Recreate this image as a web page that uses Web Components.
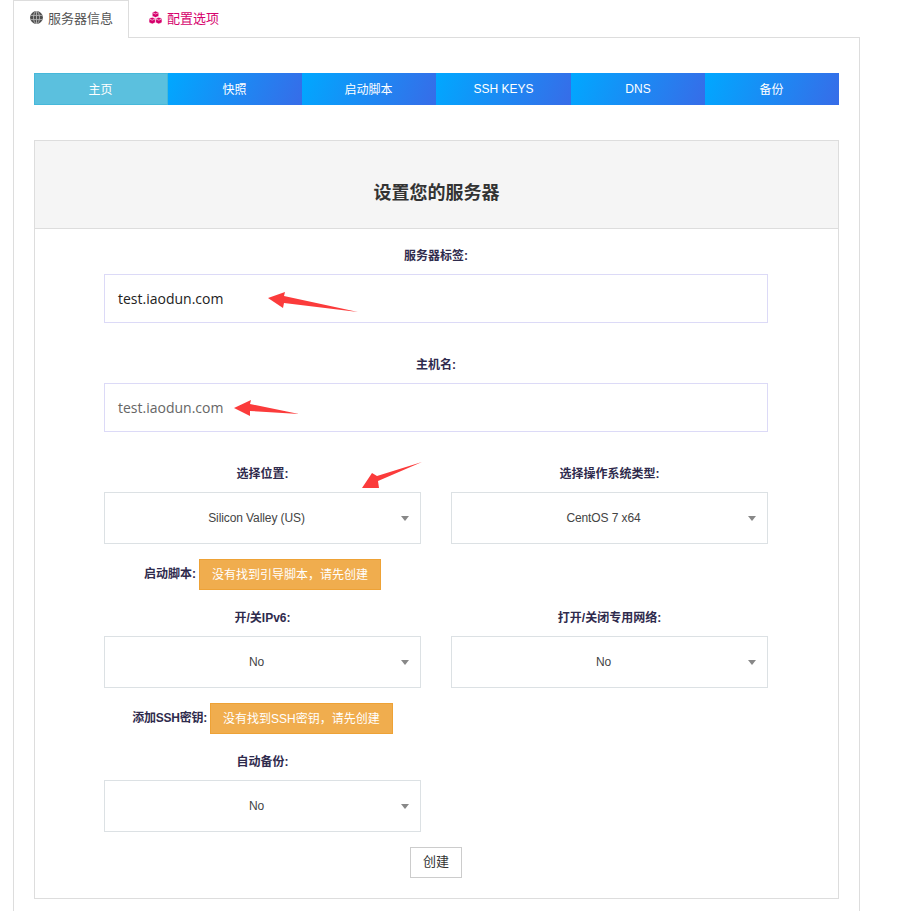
<!DOCTYPE html>
<html lang="zh"><head><meta charset="utf-8">
<style>
html,body{margin:0;padding:0;background:#fff;overflow:hidden;height:911px}
body{font-family:"Liberation Sans","Noto Sans CJK SC",sans-serif}
</style></head><body>
<server-page></server-page>
<script>
function el(name,html){
  customElements.define(name,class extends HTMLElement{
    constructor(){super();this.attachShadow({mode:'open'}).innerHTML=html;}
  });
}
const FONT='"Liberation Sans","Noto Sans CJK SC",sans-serif';
el('tab-item',`<style>
:host{display:flex;align-items:center;gap:5px;box-sizing:border-box;height:38px;font-size:13px;color:#555;padding:0 15px 4px 16px}
:host([active]){border:solid #ddd;border-width:1px 1px 0 1px;background:#fff;margin-bottom:-1px;height:38px}
:host(:not([active])){color:#d6006c;padding-left:20px}
</style><slot name="icon"></slot><slot></slot>`);
el('nav-pill',`<style>
:host{height:32px;display:flex;align-items:center;justify-content:center;color:#fff;font-size:12px;background:linear-gradient(110deg,#00a8ff,#376ce8);box-sizing:border-box}
:host([cjk]){padding:0 1px 2px 0}
:host([active]){background:#5bc0de;box-shadow:inset 0 0 0 1px #46b8da}
</style><slot></slot>`);
el('field-label',`<style>
:host{display:block;text-align:center;font-size:12px;font-weight:700;color:#2f2b4d;line-height:16px}
</style><slot></slot>`);
el('text-field',`<style>
:host{display:flex;align-items:center;box-sizing:border-box;height:49px;border:1px solid #dcdaf7;padding:0 13px;font:14px "Open Sans",sans-serif;color:#222}
:host([dim]){color:#666}
</style><slot></slot>`);
el('select-box',`<style>
:host{display:flex;align-items:center;justify-content:center;position:relative;box-sizing:border-box;height:52px;border:1px solid #dce1e4;font-size:12px;letter-spacing:-.1px;color:#444;padding-right:12px}
i{position:absolute;right:11px;top:23px;width:0;height:0;border:solid transparent;border-width:5px 4px 0;border-top-color:#888}
</style><slot></slot><i></i>`);
el('warn-row',`<style>
:host{display:flex;align-items:center;justify-content:center;width:317px;align-self:flex-start;font-size:12px;font-weight:700;color:#2f2b4d;gap:3px}
span{padding-bottom:5px;letter-spacing:var(--label-ls,0)}
b{font-weight:400;font-size:12px;color:#fff;background:#f0ad4e;border:1px solid #eea236;height:31px;box-sizing:border-box;padding:0 12px 2px;display:flex;align-items:center}
</style><span><slot></slot></span><b><slot name="msg"></slot></b>`);
el('server-page',`<style>
:host{display:block;position:relative;width:921px;height:911px;overflow:hidden;font-family:${FONT}}
.tabs{display:flex;margin-left:13px;height:38px;position:relative;z-index:1}
.panel{box-sizing:border-box;margin:-1px 0 0 13px;width:847px;height:900px;border:1px solid #ddd;border-bottom:0;padding:35px 20px 0}
.pills{display:grid;grid-template-columns:134px 134px 134px 135px 134px 134px}
.card{box-sizing:border-box;margin-top:35px;border:1px solid #ddd;height:759px}
.head{background:#f5f5f5;border-bottom:1px solid #ddd;height:88px;box-sizing:border-box;padding-top:40px;text-align:center;font-size:18px;font-weight:700;color:#333;line-height:25px}
.form{padding:19px 70px 0 69px;display:flex;flex-direction:column}
.two{display:grid;grid-template-columns:317px 317px;gap:30px}
.two>div{display:flex;flex-direction:column;gap:10px}
.btn{align-self:center;margin:15px 0 0;width:52px;height:31px;box-sizing:border-box;border:1px solid #ccc;font-size:13px;color:#333;display:flex;align-items:center;justify-content:center;padding-bottom:4px}
svg.ar{position:absolute;left:0;top:0;pointer-events:none}
</style>
<div class="tabs">
<tab-item active><svg slot="icon" width="13" height="13" viewBox="0 0 13 13"><circle cx="6.5" cy="6.5" r="6.4" fill="#4d4d4d"/><g stroke="#b5b5b5" stroke-width=".9" fill="none"><path d="M.5 4.4h12M.5 8.6h12M6.5 0v13"/><ellipse cx="6.5" cy="6.5" rx="3" ry="6.2"/></g></svg>服务器信息</tab-item>
<tab-item><svg slot="icon" width="13" height="13" viewBox="0 0 13 13" fill="#d6006c" stroke="#fff" stroke-width=".6"><path d="M6.5 0L9.8 1.4V5.2L6.5 6.6L3.2 5.2V1.4Z"/><path d="M3.2 6.2L6.4 7.6V11.6L3.2 13L0 11.6V7.6Z"/><path d="M9.8 6.2L13 7.6V11.6L9.8 13L6.6 11.6V7.6Z"/><path d="M3.6 1.8L6.5 3L9.4 1.8M.4 8L3.2 9.2L6 8M7 8L9.8 9.2L12.6 8" fill="none"/></svg>配置选项</tab-item>
</div>
<div class="panel">
<div class="pills"><nav-pill active cjk>主页</nav-pill><nav-pill cjk>快照</nav-pill><nav-pill cjk>启动脚本</nav-pill><nav-pill>SSH KEYS</nav-pill><nav-pill>DNS</nav-pill><nav-pill cjk>备份</nav-pill></div>
<div class="card">
<div class="head">设置您的服务器</div>
<div class="form">
<field-label>服务器标签:</field-label>
<text-field style="margin-top:10px">test.iaodun.com</text-field>
<field-label style="margin-top:34px">主机名:</field-label>
<text-field dim style="margin-top:10px">test.iaodun.com</text-field>
<div class="two" style="margin-top:34px"><div><field-label>选择位置:</field-label><select-box>Silicon Valley (US)</select-box></div><div><field-label>选择操作系统类型:</field-label><select-box>CentOS 7 x64</select-box></div></div>
<warn-row style="margin-top:15px">启动脚本:<span slot="msg">没有找到引导脚本，请先创建</span></warn-row>
<div class="two" style="margin-top:20px"><div><field-label>开/关IPv6:</field-label><select-box>No</select-box></div><div><field-label>打开/关闭专用网络:</field-label><select-box>No</select-box></div></div>
<warn-row style="margin-top:15px;--label-ls:-.25px">添加SSH密钥:<span slot="msg">没有找到SSH密钥，请先创建</span></warn-row>
<div class="two" style="margin-top:20px"><div><field-label>自动备份:</field-label><select-box>No</select-box></div></div>
<div class="btn">创建</div>
</div></div></div>
<svg class="ar" width="921" height="911" fill="#fb3b3b">
<path d="M268 298L285 292L284 296L358 312L284 303L283 308Z"/>
<path d="M234 408L251 400L250 404L299 414L250 411L250 416Z"/>
<path d="M362 488L372 473L377 476L422 462L378 481L379 488Z"/>
</svg>`);
</script></body></html>
